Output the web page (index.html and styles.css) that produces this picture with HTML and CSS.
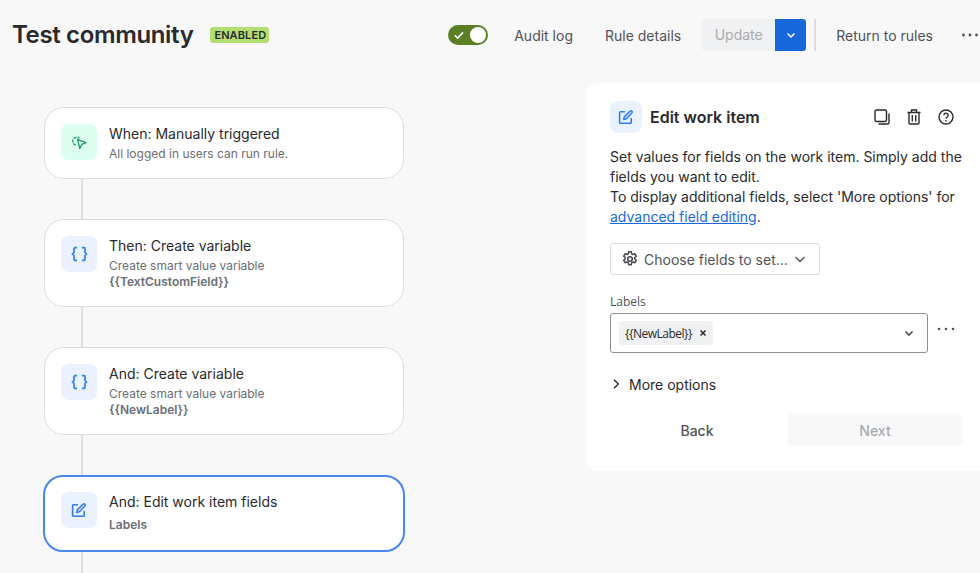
FILE: index.html
```html
<!DOCTYPE html>
<html lang="en">
<head>
<meta charset="utf-8">
<title>Test community</title>
<link rel="stylesheet" href="styles.css">
</head>
<body>
<header class="topbar">
  <h1 class="title">Test community</h1>
  <span class="lozenge">ENABLED</span>
  <div class="actions">
    <span class="toggle">
      <svg class="toggle-check" viewBox="0 0 12 12" width="12" height="12"><path d="M2 6.400l2.700 2.600L10 3.400" fill="none" stroke="#fff" stroke-width="1.600"/></svg>
      <span class="toggle-knob"></span>
    </span>
    <a class="link audit">Audit log</a>
    <a class="link details">Rule details</a>
    <span class="split">
      <span class="update">Update</span>
      <span class="update-menu"><svg viewBox="0 0 12 12" width="12" height="12"><path d="M2.500 4.500L6 8l3.500-3.500" fill="none" stroke="#fff" stroke-width="1.500"/></svg></span>
    </span>
    <span class="divider"></span>
    <a class="link return">Return to rules</a>
    <svg class="more" viewBox="0 0 18 4" width="18" height="4"><circle cx="2.500" cy="2" r="1.400"/><circle cx="9" cy="2" r="1.400"/><circle cx="15.500" cy="2" r="1.400"/></svg>
  </div>
</header>
<main class="content">
  <section class="flow">
    <article class="card card-short">
      <span class="icon icon-green">
        <svg viewBox="0 0 16 16" width="16" height="16" fill="none" stroke="#22a06b" stroke-width="1.400"><path d="M6.500 5.500L15 8.700l-4 1.600-2.200 4.200z" stroke-linejoin="round"/><path d="M4.800 11A3.800 3.800 0 0 1 5 3.500a3.800 3.800 0 0 1 3.500.4" stroke-dasharray="3 1"/></svg>
      </span>
      <div class="card-text">
        <div class="card-title">When: Manually triggered</div>
        <div class="card-sub">All logged in users can run rule.</div>
      </div>
    </article>
    <div class="connector"></div>
    <article class="card">
      <span class="icon icon-blue">
        <svg viewBox="0 0 18 18" width="18" height="18" fill="none" stroke="#357de8" stroke-width="1.700"><path d="M7 2.700H5a1 1 0 0 0-1 1v3.800L2.500 9 4 10.500v3.800a1 1 0 0 0 1 1h2"/><path d="M12 2.700h2a1 1 0 0 1 1 1v3.800L16.500 9 15 10.500v3.800a1 1 0 0 1-1 1h-2"/></svg>
      </span>
      <div class="card-text">
        <div class="card-title">Then: Create variable</div>
        <div class="card-sub">Create smart value variable</div>
        <div class="card-strong">{{TextCustomField}}</div>
      </div>
    </article>
    <div class="connector"></div>
    <article class="card">
      <span class="icon icon-blue">
        <svg viewBox="0 0 18 18" width="18" height="18" fill="none" stroke="#357de8" stroke-width="1.700"><path d="M7 2.700H5a1 1 0 0 0-1 1v3.800L2.500 9 4 10.500v3.800a1 1 0 0 0 1 1h2"/><path d="M12 2.700h2a1 1 0 0 1 1 1v3.800L16.500 9 15 10.500v3.800a1 1 0 0 1-1 1h-2"/></svg>
      </span>
      <div class="card-text">
        <div class="card-title">And: Create variable</div>
        <div class="card-sub">Create smart value variable</div>
        <div class="card-strong">{{NewLabel}}</div>
      </div>
    </article>
    <div class="connector"></div>
    <article class="card card-active">
      <span class="icon icon-blue">
        <svg viewBox="0 0 16 16" width="16" height="16" fill="none" stroke="#357de8" stroke-width="1.600"><path d="M7 2.700H2.500a.9.900 0 0 0-.9.900v9.800a.9.900 0 0 0 .9.900h9.800a.9.900 0 0 0 .9-.900V9"/><path d="M5.800 10.500l.5-2.600L12 2.200a1.200 1.200 0 0 1 1.800 0 1.200 1.200 0 0 1 0 1.800L8.300 9.800z" stroke-linejoin="round"/></svg>
      </span>
      <div class="card-text">
        <div class="card-title">And: Edit work item fields</div>
        <div class="card-strong card-strong-gap">Labels</div>
      </div>
    </article>
    <div class="connector"></div>
  </section>
  <aside class="panel">
    <div class="panel-head">
      <span class="icon icon-blue panel-icon">
        <svg viewBox="0 0 16 16" width="16" height="16" fill="none" stroke="#357de8" stroke-width="1.600"><path d="M7 2.700H2.500a.9.900 0 0 0-.9.900v9.800a.9.900 0 0 0 .9.900h9.800a.9.900 0 0 0 .9-.900V9"/><path d="M5.800 10.500l.5-2.600L12 2.200a1.200 1.200 0 0 1 1.800 0 1.200 1.200 0 0 1 0 1.800L8.300 9.800z" stroke-linejoin="round"/></svg>
      </span>
      <h2 class="panel-title">Edit work item</h2>
      <div class="panel-tools">
        <svg viewBox="0 0 16 16" width="16" height="16" fill="none" stroke="#292a2e" stroke-width="1.400"><rect x="1" y="1" width="11.500" height="11.500" rx="1.500"/><path d="M15 4.500v9a1.500 1.500 0 0 1-1.500 1.500h-9"/></svg>
        <svg viewBox="0 0 16 16" width="16" height="16" fill="none" stroke="#292a2e" stroke-width="1.400"><path d="M1.500 3.500h13M5.500 3.500V1h5v2.500M3 3.500v10.700A1 1 0 0 0 4 15h8a1 1 0 0 0 1-.800V3.500M6.300 6v6.500M9.700 6v6.500"/></svg>
        <svg viewBox="0 0 16 16" width="16" height="16" fill="none" stroke="#292a2e" stroke-width="1.400"><circle cx="8" cy="8" r="7"/><path d="M5.900 6.200a2.100 2.100 0 1 1 3.300 1.800c-.8.500-1.200.9-1.200 1.800"/><path d="M8 11v1.500"/></svg>
      </div>
    </div>
    <p class="panel-desc">Set values for fields on the work item. Simply add the fields you want to edit.<br>To display additional fields, select 'More options' for <a class="panel-link">advanced field editing</a>.</p>
    <button class="choose">
      <svg viewBox="0 0 16 16" width="16" height="16" fill="none" stroke="#44464c" stroke-width="1.500"><path d="M6.700.8h2.600l.4 2 1.300.7 1.900-.7 1.400 2.400-1.500 1.300v1.500l1.500 1.300-1.400 2.400-1.900-.7-1.300.7-.4 2H6.700l-.4-2-1.300-.7-1.900.7-1.400-2.400 1.500-1.300V6.500L1.700 5.200 3.100 2.800l1.900.7 1.300-.7z" stroke-linejoin="round"/><circle cx="8" cy="8" r="2.300"/></svg>
      <span>Choose fields to set...</span>
      <svg viewBox="0 0 12 12" width="12" height="12"><path d="M1.500 4L6 8.500 10.500 4" fill="none" stroke="#505258" stroke-width="1.300"/></svg>
    </button>
    <label class="field-label">Labels</label>
    <div class="field-row">
      <div class="select">
        <span class="tag">{{NewLabel}}<svg viewBox="0 0 8 8" width="8" height="8"><path d="M1.500 1.500l5 5M6.500 1.500l-5 5" stroke="#292a2e" stroke-width="1.500"/></svg></span>
        <svg class="select-arrow" viewBox="0 0 12 12" width="12" height="12"><path d="M2.500 4.500L6 8l3.500-3.500" fill="none" stroke="#505258" stroke-width="1.700"/></svg>
      </div>
      <svg class="field-more" viewBox="0 0 18 4" width="18" height="4"><circle cx="2" cy="2" r="1.300"/><circle cx="9" cy="2" r="1.300"/><circle cx="16" cy="2" r="1.300"/></svg>
    </div>
    <div class="options">
      <svg viewBox="0 0 12 12" width="12" height="12"><path d="M4 1.700L8.300 6 4 10.300" fill="none" stroke="#292a2e" stroke-width="1.400"/></svg>
      <span>More options</span>
    </div>
    <div class="panel-buttons">
      <button class="btn back">Back</button>
      <button class="btn next">Next</button>
    </div>
  </aside>
</main>
</body>
</html>
```
FILE: styles.css
```css
* { box-sizing: border-box; }
html, body { height: 573px; overflow: hidden; }
body {
  margin: 0;
  background: #f8f8f8;
  color: #292a2e;
  font-family: Inter, "Liberation Sans", sans-serif;
}
.topbar {
  display: flex;
  align-items: center;
  height: 70px;
  padding-left: 12px;
}
.title {
  margin: 0;
  font-size: 24px;
  line-height: 28px;
  font-weight: 600;
  letter-spacing: -.36px;
  color: #292a2e;
}
.lozenge {
  margin-left: 17px;
  height: 16px;
  padding: 0 3px 0 4px;
  border-radius: 3px;
  background: #b3df72;
  font-size: 11px;
  line-height: 16px;
  font-weight: 600;
  letter-spacing: .1px;
  color: #292a2e;
}
.actions {
  display: flex;
  align-items: center;
  margin-left: auto;
  height: 32px;
  font-size: 14px;
  color: #505258;
}
.toggle {
  display: flex;
  align-items: center;
  justify-content: space-between;
  width: 40px;
  height: 20px;
  padding: 0 2px 0 5px;
  border-radius: 10px;
  background: #5b7f24;
}
.toggle-knob {
  width: 16px;
  height: 16px;
  border-radius: 50%;
  background: #fff;
}
.link { white-space: nowrap; }
.audit { margin-left: 26px; }
.details { margin-left: 32px; }
.split {
  display: flex;
  margin-left: 21px;
  height: 32px;
  border-radius: 3px;
  overflow: hidden;
}
.update {
  width: 73px;
  background: #f0f1f2;
  color: #a9abaf;
  line-height: 32px;
  text-align: center;
}
.update-menu {
  display: flex;
  align-items: center;
  justify-content: center;
  width: 31px;
  background: #1868db;
}
.divider {
  width: 2px;
  height: 32px;
  margin-left: 8px;
  background: #dddee1;
}
.return { margin-left: 20px; }
.more {
  margin: 0 1px 0 28px;
  fill: #505258;
}
.content {
  display: flex;
  align-items: flex-start;
  padding-left: 44px;
  padding-top: 13px;
}
.flow {
  width: 360px;
  padding-top: 24px;
  flex: none;
}
.card {
  display: flex;
  gap: 12px;
  height: 88px;
  padding: 16px;
  border: 1px solid #dddee1;
  border-radius: 20px;
  background: #fff;
}
.card-short { height: 72px; }
.card-active {
  height: 77px;
  margin: 0 -1px;
  padding: 15px 16px;
  border: 2px solid #4688ec;
}
.icon {
  display: flex;
  align-items: center;
  justify-content: center;
  width: 36px;
  height: 36px;
  flex: none;
  border-radius: 8px;
}
.icon-green { background: #dcfff1; }
.icon-blue { background: #e9f2fe; }
.card-title {
  font-size: 14px;
  line-height: 20px;
  color: #292a2e;
}
.card-sub {
  margin-top: 2px;
  font-size: 12px;
  line-height: 16px;
  color: #6b6e76;
}
.card-strong {
  font-size: 12px;
  line-height: 16px;
  font-weight: 600;
  color: #6b6e76;
}
.card-strong-gap { margin-top: 5px; }
.connector {
  width: 2px;
  height: 40px;
  margin-left: 37px;
  background: #dddee1;
}
.panel {
  width: 394px;
  height: 388px;
  margin-left: 182px;
  padding: 18px 18px 0 24px;
  border-radius: 12px 0 0 12px;
  background: #fff;
}
.panel-head {
  display: flex;
  align-items: center;
  height: 32px;
}
.panel-icon {
  width: 32px;
  height: 32px;
}
.panel-title {
  margin: 0 0 0 8px;
  font-size: 16px;
  line-height: 20px;
  font-weight: 600;
}
.panel-tools {
  display: flex;
  gap: 16px;
  margin-left: auto;
  margin-right: 8px;
}
.panel-desc {
  margin: 14px 0 0;
  font-size: 14px;
  line-height: 20px;
  color: #292a2e;
}
.panel-link {
  color: #1868db;
  text-decoration: underline;
}
.choose {
  display: flex;
  align-items: center;
  gap: 6px;
  width: 210px;
  height: 32px;
  margin-top: 16px;
  padding: 0 10px 0 11px;
  border: 1px solid #dddee1;
  border-radius: 3px;
  background: #fff;
  font: inherit;
  font-size: 14px;
  color: #505258;
  white-space: nowrap;
}
.field-label {
  display: block;
  margin-top: 19px;
  font-family: "Open Sans", sans-serif;
  font-size: 12px;
  line-height: 16px;
  font-weight: 500;
  color: #505258;
}
.field-row {
  display: flex;
  align-items: flex-start;
  margin-top: 3px;
}
.select {
  display: flex;
  align-items: center;
  width: 318px;
  height: 40px;
  padding: 0 12px 0 8px;
  border: 1px solid #8c8f97;
  border-radius: 3px;
}
.tag {
  display: flex;
  align-items: center;
  gap: 7px;
  height: 24px;
  padding: 0 6px;
  border-radius: 3px;
  background: #f0f1f2;
  font-family: "Open Sans", sans-serif;
  font-size: 12px;
  letter-spacing: -.5px;
  color: #292a2e;
}
.select-arrow { margin-left: auto; }
.field-more {
  margin: 14px 0 0 9px;
  fill: #505258;
}
.options {
  display: flex;
  align-items: center;
  gap: 7px;
  height: 20px;
  margin-top: 21px;
  font-size: 14px;
}
.panel-buttons {
  display: grid;
  grid-template-columns: 174px 174px;
  justify-content: space-between;
  margin-top: 20px;
}
.btn {
  height: 32px;
  border: 0;
  border-radius: 3px;
  font: inherit;
  font-size: 14px;
  font-weight: 500;
}
.back {
  background: transparent;
  color: #505258;
}
.next {
  background: #f8f8f8;
  color: #a9abaf;
}
```
